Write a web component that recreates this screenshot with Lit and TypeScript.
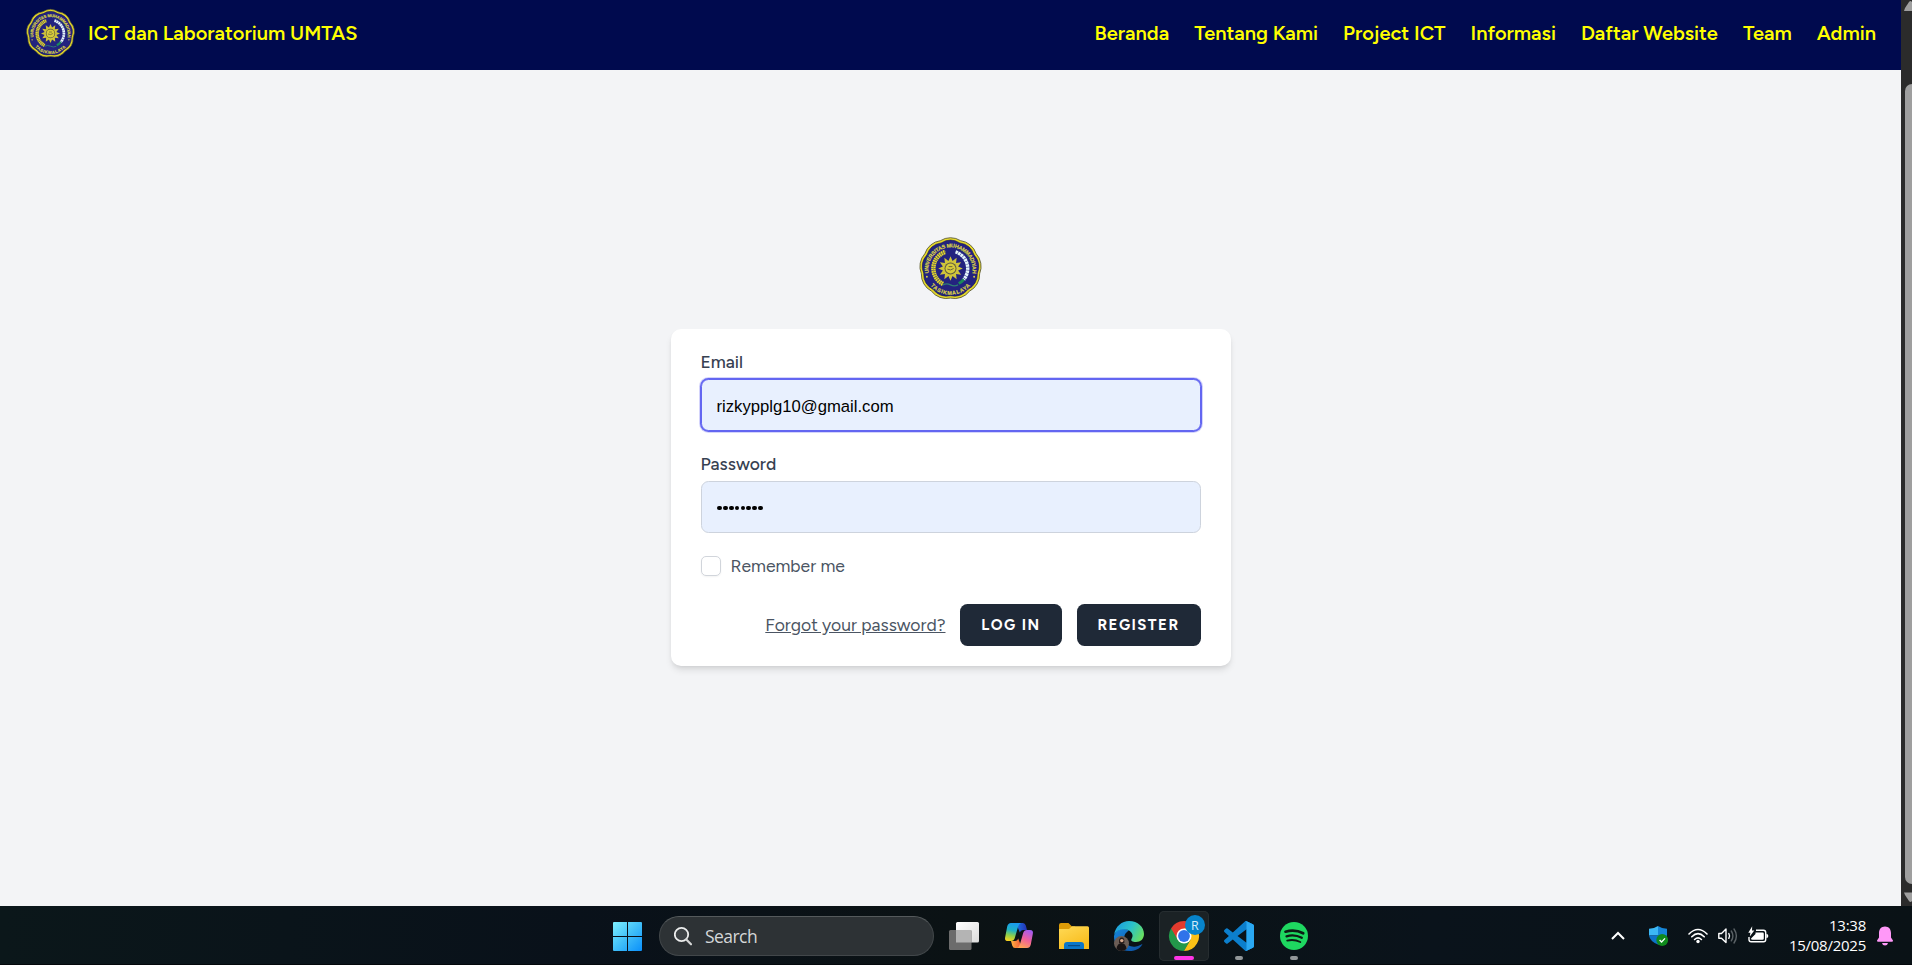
import { LitElement, html, css, svg } from "lit";
import { customElement } from "lit/decorators.js";

const TAU = Math.PI * 2;

/* Lobed badge outline: n petals joined at notches on a circle of radius r. */
const lobes = (n: number, r: number, arc: number): string => {
  let d = "";
  for (let i = 0; i <= n; i++) {
    const a = ((i + 0.5) / n) * TAU - Math.PI / 2;
    const x = (50 + Math.cos(a) * r).toFixed(2);
    const y = (50 + Math.sin(a) * r).toFixed(2);
    d += i === 0 ? `M${x} ${y}` : `A${arc} ${arc} 0 0 1 ${x} ${y}`;
  }
  return d + "Z";
};

const star = (n: number, outer: number, inner: number): string =>
  Array.from({ length: n * 2 }, (_, i) => {
    const a = (i / (n * 2)) * TAU - Math.PI / 2;
    const r = i % 2 ? inner : outer;
    return `${(50 + Math.cos(a) * r).toFixed(2)},${(50 + Math.sin(a) * r).toFixed(2)}`;
  }).join(" ");

@customElement("campus-crest")
export class CampusCrest extends LitElement {
  static styles = css`
    :host { display: block; }
    svg { display: block; width: 100%; height: 100%; overflow: visible; }
    .ring { font: 700 8.5px "Liberation Sans", sans-serif; fill: #ddd447; stroke: #ddd447; stroke-width: 0.3; }
  `;
  render() {
    return html`<svg viewBox="0 0 100 100">
      <defs>
        <path id="upper" d="M15.5 57.5A35 35 0 1 1 84.5 57.5"/>
        <path id="lower" d="M12 67A41.600 41.600 0 0 0 88 67"/>
      </defs>
      <path d=${lobes(9, 47, 30)} fill="#e6da28" stroke="#5a5836" stroke-width="1.400"/>
      <path d=${lobes(9, 43.2, 28)} fill="#23237f" stroke="#17174f" stroke-width="1"/>
      <text class="ring"><textPath href="#upper" textLength="122">UNIVERSITAS MUHAMMADIYAH</textPath></text>
      <text class="ring"><textPath href="#lower" startOffset="12" textLength="71">TASIKMALAYA</textPath></text>
      <circle cx="12.500" cy="63" r="1.500" fill="#ddd447"/><circle cx="87.500" cy="63" r="1.500" fill="#ddd447"/>
      <path d="M38 74.500A27.500 27.500 0 0 1 42 23.700" fill="none" stroke="#e8dc2d" stroke-width="7" stroke-dasharray="2.600 .8"/>
      <path d="M38 74.500A27.500 27.500 0 0 1 42 23.700" fill="none" stroke="#8f8a35" stroke-width="1"/>
      <path d="M58 23.700A27.500 27.500 0 0 1 71 67.500" fill="none" stroke="#e4f5fa" stroke-width="5.500" stroke-dasharray="4 .7"/>
      <path d="M71 67.500A27.500 27.500 0 0 1 63 74" fill="none" stroke="#1b8a5a" stroke-width="4.500"/>
      <polygon points=${star(12, 19.5, 12.5)} fill="#cfc43a"/>
      <circle cx="50" cy="50" r="9.500" fill="#5c5844"/>
      <circle cx="50" cy="50" r="8" fill="#d6cb3b"/>
      <path d="M45 51q5 3 10-1M47 47h6" stroke="#55503a" stroke-width="1.300" fill="none"/>
      <path d="M38 76q6-3 12 0t12 0" stroke="#2f7f72" stroke-width="1.800" fill="none"/>
    </svg>`;
  }
}

@customElement("site-header")
export class SiteHeader extends LitElement {
  static styles = css`
    :host { display: flex; align-items: center; height: 70px; padding: 0 25px; box-sizing: border-box; background: #000a4e; color: #ff0; font: 600 20px/30px Figtree, Lato, sans-serif; }
    campus-crest { width: 49px; height: 49px; margin: -3px 13px 0 1px; }
    .brand { margin-top: -4px; }
    nav { display: flex; gap: 25px; margin: -4px 0 0 auto; }
    a { color: inherit; text-decoration: none; white-space: nowrap; }
  `;
  private links = ["Beranda", "Tentang Kami", "Project ICT", "Informasi", "Daftar Website", "Team", "Admin"];
  render() {
    return html`<campus-crest></campus-crest><span class="brand">ICT dan Laboratorium UMTAS</span>
      <nav>${this.links.map((l) => html`<a>${l}</a>`)}</nav>`;
  }
}

@customElement("login-card")
export class LoginCard extends LitElement {
  static styles = css`
    :host { display: flex; flex-direction: column; width: 560px; height: 337px; box-sizing: border-box; padding: 20px 30px; background: #fff; border-radius: 10px; box-shadow: 0 5px 7.5px -1px rgba(0,0,0,.1), 0 2.5px 5px -2.5px rgba(0,0,0,.1); color: #374151; font: 500 17.5px/25px Figtree, Lato, sans-serif; }
    .field { height: 52px; box-sizing: border-box; margin: 5px 0 20px; padding: 3px 15px 0; display: flex; align-items: center; border: 1px solid #cdd3dd; border-radius: 7.5px; background: #e8f0fe; color: #000; font: 16.67px "Liberation Sans", Arial, sans-serif; }
    .focus { border-color: #6366f1; box-shadow: 0 0 0 1px #6366f1, 0 0 0 2px rgba(99,102,241,.28); }
    .dots { gap: 1.1px; padding: 2px 15.5px 0; }
    .dots i { width: 4.8px; height: 4.8px; border-radius: 50%; background: #000; }
    .remember { display: flex; align-items: center; gap: 10px; height: 25px; color: #4b5563; font-weight: 400; }
    .box { width: 20px; height: 20px; box-sizing: border-box; border: 1px solid #d1d5db; border-radius: 5px; box-shadow: 0 1px 2px rgba(0,0,0,.05); }
    .actions { display: flex; justify-content: flex-end; align-items: center; margin-top: 26px; height: 42px; color: #4b5563; font-weight: 400; }
    .forgot { text-decoration: underline; margin: -1px 14px 0 0; }
    .btn { height: 42px; box-sizing: border-box; display: flex; align-items: center; justify-content: center; border-radius: 7.5px; background: #1f2937; color: #fff; font-size: 15px; font-weight: 700; letter-spacing: 1.5px; }
    .login { width: 102px; padding-left: 1px; margin-right: 15px; }
    .register { width: 124px; }
  `;
  render() {
    return html`<label>Email</label>
      <div class="field focus">rizkypplg10@gmail.com</div>
      <label>Password</label>
      <div class="field dots">${Array.from({ length: 8 }, () => html`<i></i>`)}</div>
      <div class="remember"><span class="box"></span><span>Remember me</span></div>
      <div class="actions"><span class="forgot">Forgot your password?</span><span class="btn login">LOG IN</span><span class="btn register">REGISTER</span></div>`;
  }
}

@customElement("page-scrollbar")
export class PageScrollbar extends LitElement {
  static styles = css`
    :host { display: flex; flex-direction: column; background: #2b2b2b; overflow: hidden; }
    svg { display: block; width: 14px; height: 12px; flex: none; margin-left: 2px; }
    .thumb { width: 14px; height: 800px; margin: 72px 0 7px 4px; border-radius: 7px; background: #9f9f9f; }
  `;
  render() {
    return html`<svg viewBox="0 0 14 12"><path d="M1 11L2 8 6 2Q7.500 0 9 2L14 11Z" fill="#9f9f9f"/></svg>
      <div class="thumb"></div>
      <svg viewBox="0 0 14 12"><path d="M1 1.500L2 4 6 10Q7.500 12 9 10L14 1.500Z" fill="#9f9f9f"/></svg>`;
  }
}

const taskView = svg`
  <rect x="17" y="11" width="23" height="20.500" rx="1.500" fill="url(#tv)"/>
  <rect x="10" y="19" width="22.500" height="20" rx="1.500" fill="#6c6c6c"/>
  <rect x="17" y="19" width="15.500" height="12.500" fill="#b4b4b4"/>
  <defs><linearGradient id="tv" x2="1" y2="1"><stop stop-color="#fff"/><stop offset="1" stop-color="#dcdcdc"/></linearGradient></defs>`;

const copilot = svg`
  <defs>
    <linearGradient id="c1" x1=".5" x2=".3" y2="1"><stop stop-color="#1a9bef"/><stop offset=".4" stop-color="#1eb2c4"/><stop offset=".7" stop-color="#8fcf4a"/><stop offset="1" stop-color="#f6d320"/></linearGradient>
    <linearGradient id="c2" x1=".7" x2=".3" y2="1"><stop stop-color="#a45bf0"/><stop offset=".5" stop-color="#f0609b"/><stop offset="1" stop-color="#ffa552"/></linearGradient>
    <linearGradient id="c3" x2="1"><stop stop-color="#1c6fe0"/><stop offset="1" stop-color="#2430b4"/></linearGradient>
    <linearGradient id="c4" x2="1"><stop stop-color="#ffb13d"/><stop offset="1" stop-color="#f05a3c"/></linearGradient>
  </defs>
  <path d="M23 12H29Q31 12 31.800 14.500L33 19H29Q26.500 19 25.800 21.500L24 17Z" fill="url(#c3)"/>
  <path d="M27 37H21Q19 37 18.200 34.500L17 30H21Q23.500 30 24.200 27.500L26 32Z" fill="url(#c4)"/>
  <path d="M17 12H27Q24.800 13 24 16L20.800 27Q20 30 17 30H14Q10.300 30 11.200 26L13.200 15.500Q14 12 17 12Z" fill="url(#c1)"/>
  <path d="M33 37H23Q25.200 36 26 33L29.200 22Q30 19 33 19H36Q39.700 19 38.800 23L36.800 33.500Q36 37 33 37Z" fill="url(#c2)"/>`;

const folder = svg`
  <defs><linearGradient id="f" x2=".6" y2="1"><stop stop-color="#ffda57"/><stop offset="1" stop-color="#f8bc1c"/></linearGradient></defs>
  <path d="M10 14Q10 12 12 12H19.500L23 15.500H26V22H10Z" fill="#dd9c08"/>
  <path d="M10 18H20L23 15.300H38.500Q40 15.300 40 16.800V38H10Z" fill="url(#f)"/>
  <path d="M15 38V34Q15 31 18 31H32Q35 31 35 34V38Z" fill="#0a76c8"/>
  <path d="M19 34.700H31" stroke="#074b87" stroke-width="1.200"/>`;

const edge = svg`
  <defs>
    <linearGradient id="e1" x1="0" x2="1" y1=".3" y2=".7"><stop stop-color="#1b9de0"/><stop offset=".5" stop-color="#2cc3c9"/><stop offset="1" stop-color="#6be05a"/></linearGradient>
    <linearGradient id="e2" x1="0" x2="1" y2="1"><stop stop-color="#1686dc"/><stop offset="1" stop-color="#0c4fa0"/></linearGradient>
  </defs>
  <path d="M10 25C12 18 19 16.500 25 19.500C20.500 22 19.500 26 20.500 29.500C22 34 27 36.500 32 35.500C35 35 37 33.500 38.500 33C35.500 38.500 30.500 40 25.500 40C16 40 9.500 33.500 10 25Z" fill="url(#e2)"/>
  <path d="M10 24C11.500 15 18 10 25 10C34 10 40 16 40 23C40 28 36.500 31 32 31C28.500 31 26.500 29.800 27.500 28C30 24.500 28 20.500 23.500 18.800C18 17 12 19.500 10 24Z" fill="url(#e1)"/>
  <circle cx="17.500" cy="32.500" r="7.500" fill="#6b5d55"/>
  <path d="M12.500 38Q13 32.500 17.500 32Q22 32.500 22.500 38Q17.500 42 12.500 38Z" fill="#191414"/>
  <path d="M15 32Q14.500 26.500 17.800 26.500Q21 26.500 20.300 32Z" fill="#2a1d1a"/><circle cx="17.800" cy="29.600" r="1.700" fill="#d8ab90"/>`;

const chrome = svg`
  <path d="M25 25L12 17.500A15 15 0 0 1 38 17.500Z" fill="#e33b2e"/>
  <path d="M25 25L12 17.500A15 15 0 0 0 25 40L31.500 28.700Z" fill="#23984a"/>
  <path d="M25 40A15 15 0 0 0 38 17.500H25L31.500 28.700Z" fill="#fbc116"/>
  <path d="M25 17.500H38L31 25Z" fill="#fbc116"/><path d="M12 17.500L18.500 28.700 25 25V17.500Z" fill="#e33b2e"/><path d="M12 17.500L18.500 28.700 22 30 20 34 12 25Z" fill="#23984a"/>
  <circle cx="25" cy="25" r="7.500" fill="#fff"/><circle cx="25" cy="25" r="5.900" fill="#2f73ea"/>
  <circle cx="36" cy="14" r="10" fill="#0784cb"/>`;

const vscode = svg`
  <g transform="translate(10 10) scale(1.250)">
    <path d="M23.150 2.587L18.210.21a1.494 1.494 0 0 0-1.705.29l-9.460 8.630-4.120-3.128a.999.999 0 0 0-1.276.057L.327 7.261A1 1 0 0 0 .326 8.740L3.899 12 .326 15.260a1 1 0 0 0 .001 1.479L1.650 17.940a.999.999 0 0 0 1.276.057l4.120-3.128 9.460 8.630a1.492 1.492 0 0 0 1.704.29l4.942-2.377A1.500 1.500 0 0 0 24 20.060V3.939a1.500 1.500 0 0 0-.85-1.352zm-5.146 14.861L10.826 12l7.178-5.448v10.896z" fill="#0c7fcd"/>
    <path d="M18 .2L23.150 2.587Q24 3 24 3.939V20.060Q24 21 23.150 21.410L18.210 23.790Q17.300 24.100 16.900 23.700Q18 24 18 22.500V1.500Q18 0 16.900.3Q17.300 0 18 .2Z" fill="#2aa8f2"/>
  </g>`;

const spotify = svg`
  <circle cx="25" cy="25" r="14" fill="#1ed760"/>
  <g fill="none" stroke="#0d1a14" stroke-linecap="round">
    <path d="M16.500 20.700Q26 18 34.200 22.300" stroke-width="2.700"/>
    <path d="M17.500 25.300Q25.500 23 32.800 26.800" stroke-width="2.300"/>
    <path d="M18.200 29.600Q25 27.800 31.300 31" stroke-width="1.900"/>
  </g>`;

@customElement("task-bar")
export class TaskBar extends LitElement {
  static styles = css`
    :host { display: flex; align-items: center; height: 59px; box-sizing: border-box; padding: 2px 19px 0 613px; background: linear-gradient(90deg, #0b171a 0, #09111a 30%, #0b1214 50%, #0a131b 75%, #0a1216 100%); border-bottom: 1px solid #04080c; color: #fff; font: 15px/20px "Segoe UI", "Open Sans", sans-serif; }
    svg { display: block; flex: none; }
    .search { width: 275px; height: 40px; box-sizing: border-box; margin: 0 5px 0 17px; padding: 0 0 1px 14px; display: flex; align-items: center; gap: 13px; border: 1px solid #42474a; border-top-color: #555a5c; border-radius: 20px; background: #2d3235; color: #d4d7d8; font-size: 17.5px; letter-spacing: -.55px; }
    .apps { display: flex; gap: 5px; }
    .app { width: 50px; height: 50px; border-radius: 5px; }
    .active { background: #1b2225; box-shadow: inset 0 0 0 1px #262d30; }
    .badge { font: 12.5px "Open Sans", sans-serif; fill: #d5ecfa; }
    .tray { margin-left: auto; display: flex; align-items: center; }
    .clock { width: 97px; margin-top: -2px; text-align: right; letter-spacing: -.25px; }
    .chev { margin-right: 24px; } .shield { margin-right: 20px; } .net { margin-right: 10px; } .bell { margin-left: 11px; }
  `;
  render() {
    const apps = [
      { icon: taskView }, { icon: copilot }, { icon: folder }, { icon: edge },
      { icon: chrome, active: true }, { icon: vscode, open: true }, { icon: spotify, open: true },
    ];
    return html`
      <svg width="29" height="29" viewBox="0 0 29 29">
        <defs><linearGradient id="w" gradientUnits="userSpaceOnUse" x1="0" y1="0" x2="29" y2="29"><stop stop-color="#7df0ff"/><stop offset=".5" stop-color="#41bff8"/><stop offset="1" stop-color="#0a90fb"/></linearGradient></defs>
        <path d="M1 0H14V14H0V1Q0 0 1 0ZM15 0H28Q29 0 29 1V14H15ZM0 15H14V29H1Q0 29 0 28ZM15 15H29V28Q29 29 28 29H15Z" fill="url(#w)"/>
      </svg>
      <div class="search">
        <svg width="18" height="20" viewBox="0 0 18 20"><circle cx="7.500" cy="8.500" r="6.700" fill="#3d4245" stroke="#eceded" stroke-width="1.800"/><path d="M12.300 13.500L17 18.300" stroke="#d5d6d6" stroke-width="2.200" stroke-linecap="round"/></svg>
        <span>Search</span>
      </div>
      <div class="apps">${apps.map((a) => html`<svg class="app ${a.active ? "active" : ""}" viewBox="0 0 50 50">${a.icon}
        ${a.active ? svg`<text class="badge" x="32.100" y="18.600">R</text><rect x="15" y="45" width="20" height="4" rx="2" fill="#ff35e6"/>` : ""}
        ${a.open ? svg`<rect x="21" y="45" width="8" height="4" rx="2" fill="#929799"/>` : ""}</svg>`)}</div>
      <div class="tray">
        <svg class="chev" width="14" height="20" viewBox="0 0 14 20"><path d="M1 13L7 7 13 13" fill="none" stroke="#fff" stroke-width="2"/></svg>
        <svg class="shield" width="19" height="20" viewBox="0 0 19 20">
          <path d="M9 0Q13 2.800 18 2.800V10Q17 15.500 9 18.500Z" fill="#1786d8"/><path d="M9 0Q5 2.800 0 2.800V9.500H9Z" fill="#3cb8f4"/><path d="M0 9.500H9V18.500Q1 15.500 0 9.500Z" fill="#0d72c8"/><path d="M9 9.500H18Q17 15.500 9 18.500Z" fill="#0a5aa8"/>
          <circle cx="13.200" cy="14" r="5.900" fill="#0f8a1c"/><path d="M10.600 14L12.600 16 16 12.400" stroke="#fff" stroke-width="1.300" fill="none"/>
        </svg>
        <svg class="net" width="20" height="20" viewBox="0 0 20 20"><g fill="none" stroke="#fff" stroke-width="1.600" stroke-linecap="round"><path d="M1 8Q10-1 19 8M3.800 10.800Q10 4.600 16.200 10.800M6.600 13.500Q10 10.200 13.400 13.500"/></g><circle cx="10" cy="15.500" r="1.700" fill="#fff"/></svg>
        <svg class="net" width="20" height="20" viewBox="0 0 20 20"><g fill="none" stroke="#fff" stroke-width="1.400" stroke-linejoin="round" stroke-linecap="round"><path d="M.8 7.500H3.500L8 3V16.500L3.500 12.300H.8Z"/><path d="M10.800 7.500Q12.300 9.900 10.800 12.300"/><path d="M13.300 5Q16.500 9.900 13.300 14.800M16 3Q20.800 9.900 16 17" stroke="#5b6266"/></g></svg>
        <svg width="21" height="20" viewBox="0 0 21 20"><path d="M8 4.200H15.500Q17.700 4.200 17.700 6.400V13.600Q17.700 15.800 15.500 15.800H3.200Q1 15.800 1 13.600V11" fill="none" stroke="#fff" stroke-width="1.400"/><path d="M7.500 6.400H14.500Q15.800 6.400 15.800 7.700V12.500Q15.800 13.800 14.500 13.800H4.500Q3 13.800 3 12.500L7.500 8Z" fill="#fff"/><path d="M18.400 7.800Q20.300 8 20.300 10T18.400 12.200Z" fill="#fff"/><path d="M4.200.3L.3 6.700H2.400L1.800 10.500 6.300 4.600H4Z" fill="#fff"/></svg>
        <div class="clock">13:38<br>15/08/2025</div>
        <svg class="bell" width="16" height="20" viewBox="0 0 16 20"><path d="M8 .5C11.800.5 14 3.300 14 7V11.500L16 14.600Q16 15.800 15 15.800H1Q0 15.800 0 14.600L2 11.500V7C2 3.300 4.200.5 8 .5Z" fill="#ff98f8"/><path d="M5 17H11Q10.400 19.500 8 19.500T5 17Z" fill="#ff98f8"/></svg>
      </div>`;
  }
}

@customElement("app-root")
export class AppRoot extends LitElement {
  static styles = css`
    :host { display: block; width: 1912px; height: 965px; overflow: hidden; background: #f3f4f6; }
    .window { display: grid; grid-template-columns: 1901px 11px; height: 906px; }
    .center { display: flex; flex-direction: column; align-items: center; padding-top: 167px; }
    .crest { width: 63px; height: 63px; margin-bottom: 29px; }
  `;
  render() {
    return html`<div class="window">
        <main><site-header></site-header><div class="center"><campus-crest class="crest"></campus-crest><login-card></login-card></div></main>
        <page-scrollbar></page-scrollbar>
      </div>
      <task-bar></task-bar>`;
  }
}
